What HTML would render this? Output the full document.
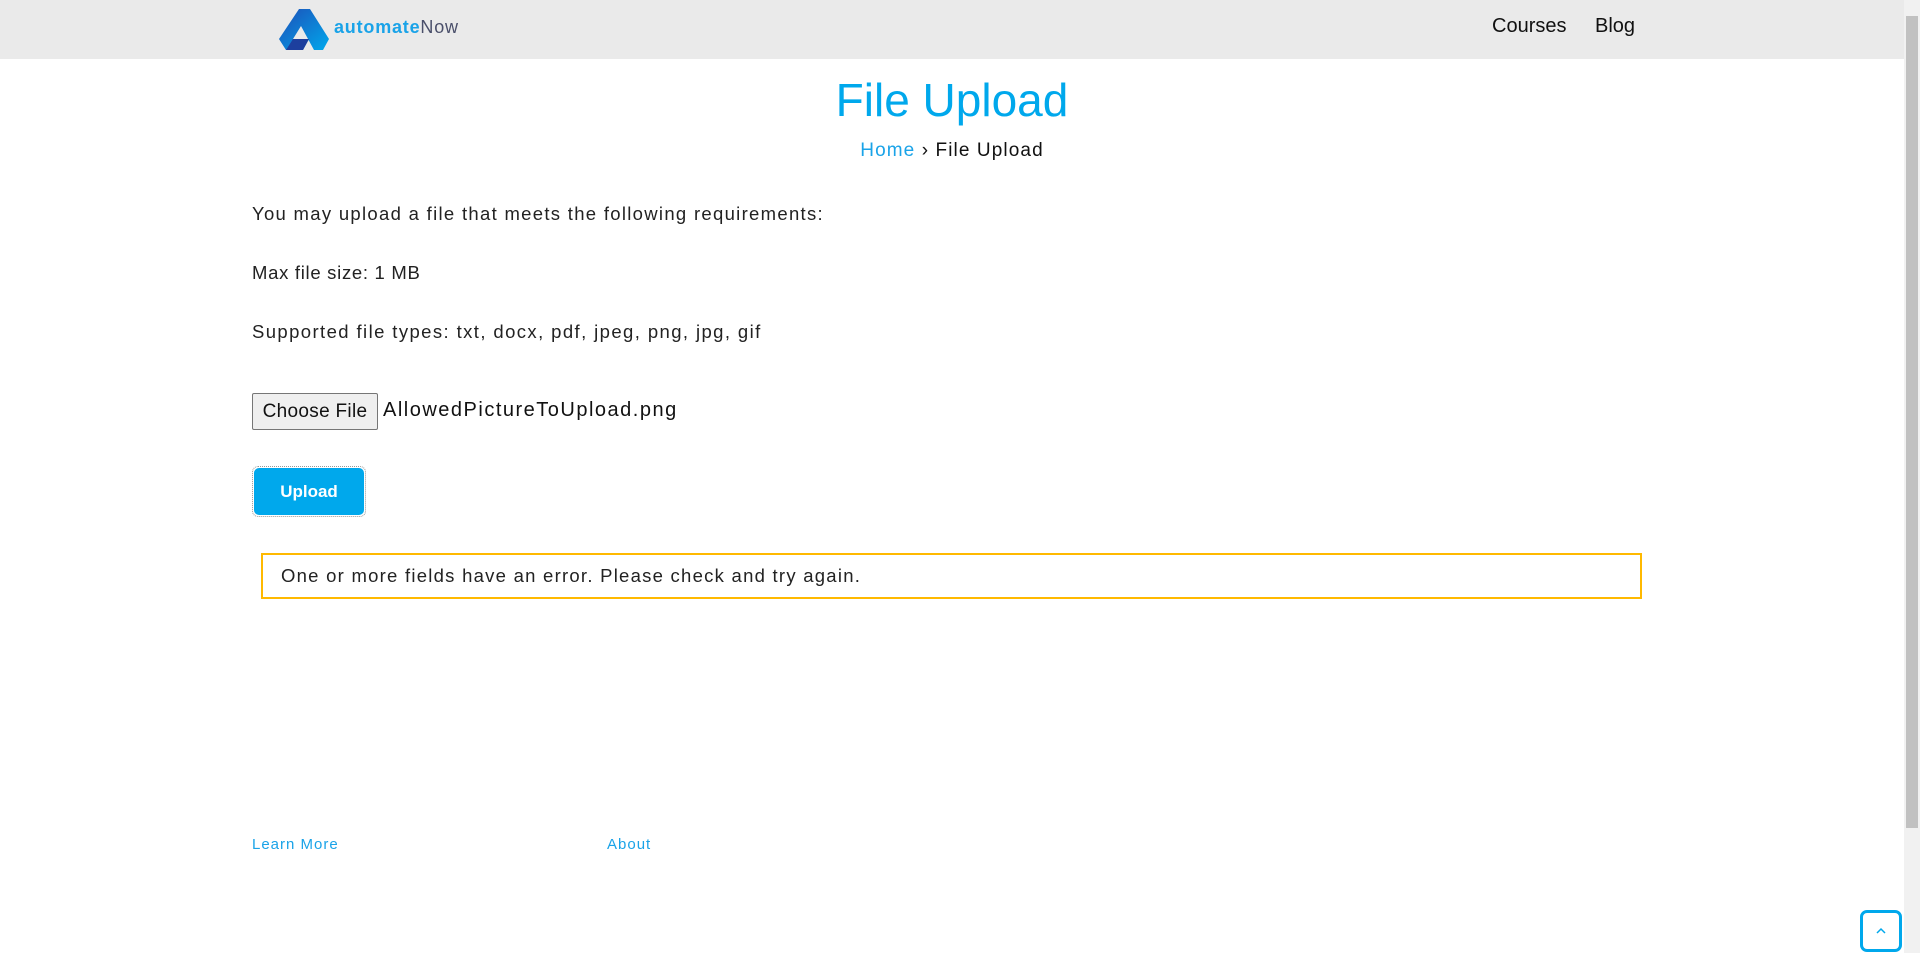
<!DOCTYPE html>
<html><head><meta charset="utf-8">
<style>
*{margin:0;padding:0;box-sizing:border-box}
html,body{width:1920px;height:953px;overflow:hidden;background:#fff;font-family:"Liberation Sans",sans-serif;color:#111}
.hdr{position:absolute;left:0;top:0;width:1904px;height:59px;background:#eaeaea}
.logo{position:absolute;left:279px;top:9px}
.logotext{position:absolute;left:334px;top:17px;font-size:18px;letter-spacing:0.8px}
.logotext b{color:#1aa3e8}
.logotext span{color:#4a4f6a}
.nav{position:absolute;top:15px;font-size:20px;color:#111}
.title{position:absolute;left:0;width:1904px;top:73px;text-align:center;font-size:46px;color:#00a8ec}
.bc{position:absolute;left:0;width:1904px;top:140px;text-align:center;font-size:19px;letter-spacing:1.1px}
.bc a{color:#1aa3e8;text-decoration:none}
.p{position:absolute;left:252px;font-size:18.5px;color:#222;letter-spacing:1.3px}
.fbtn{position:absolute;left:252px;top:393px;width:126px;height:37px;background:#efefef;border:1px solid #767676;border-radius:2px;font-size:19px;text-align:center;line-height:35px;color:#111;letter-spacing:0.3px}
.fname{position:absolute;left:383px;top:399px;font-size:20px;letter-spacing:1.5px}
.up{position:absolute;left:252px;top:466px;width:114px;height:51px;border:1px dotted #999;border-radius:6px;padding:1px}
.up div{width:100%;height:100%;background:#00a8ec;border-radius:5px;color:#fff;font-weight:bold;font-size:17px;text-align:center;line-height:47px}
.err{position:absolute;left:261px;top:553px;width:1381px;height:46px;border:2px solid #ffb900;font-size:18.5px;padding-left:18px;line-height:42px;color:#222;letter-spacing:1.25px}
.ft{position:absolute;top:836px;font-size:15px;color:#1aa3e8;letter-spacing:1px}
.sb{position:absolute;left:1904px;top:0;width:16px;height:953px;background:#f1f1f1}
.sb div{position:absolute;left:2px;top:16px;width:12px;height:812px;background:#c1c1c1}
.totop{position:absolute;left:1860px;top:910px;width:42px;height:42px;border:3px solid #00a8ec;border-radius:7px;background:#fff}
</style></head><body>
<div class="hdr">
 <svg class="logo" width="50" height="42" viewBox="0 0 50 42">
  <defs><linearGradient id="g" x1="0" y1="0" x2="1" y2="1"><stop offset="0" stop-color="#1d4fb8"/><stop offset="1" stop-color="#00a8ec"/></linearGradient></defs>
  <polygon points="20,0 31,0 50,30 44,41 35,41 22,17 14,30 30,30 24,41 7,41 0,30" fill="url(#g)"/>
  <polygon points="7,41 14,30 30,30 24,41" fill="#1d3f9e"/>
 </svg>
 <div class="logotext"><b>automate</b><span>Now</span></div>
 <div class="nav" style="left:1492px">Courses</div>
 <div class="nav" style="left:1595px">Blog</div>
</div>
<div class="title">File Upload</div>
<div class="bc"><a>Home</a> › File Upload</div>
<div class="p" style="top:203px">You may upload a file that meets the following requirements:</div>
<div class="p" style="top:262px;letter-spacing:0.7px">Max file size: 1 MB</div>
<div class="p" style="top:321px;letter-spacing:1.4px">Supported file types: txt, docx, pdf, jpeg, png, jpg, gif</div>
<div class="fbtn">Choose File</div>
<div class="fname">AllowedPictureToUpload.png</div>
<div class="up"><div>Upload</div></div>
<div class="err">One or more fields have an error. Please check and try again.</div>
<div class="ft" style="left:252px">Learn More</div>
<div class="ft" style="left:607px">About</div>
<div class="sb"><div></div></div>
<div class="totop"><svg width="36" height="36" viewBox="0 0 36 36"><polyline points="14,20 18,16 22,20" fill="none" stroke="#00a8ec" stroke-width="1.5"/></svg></div>
</body></html>
